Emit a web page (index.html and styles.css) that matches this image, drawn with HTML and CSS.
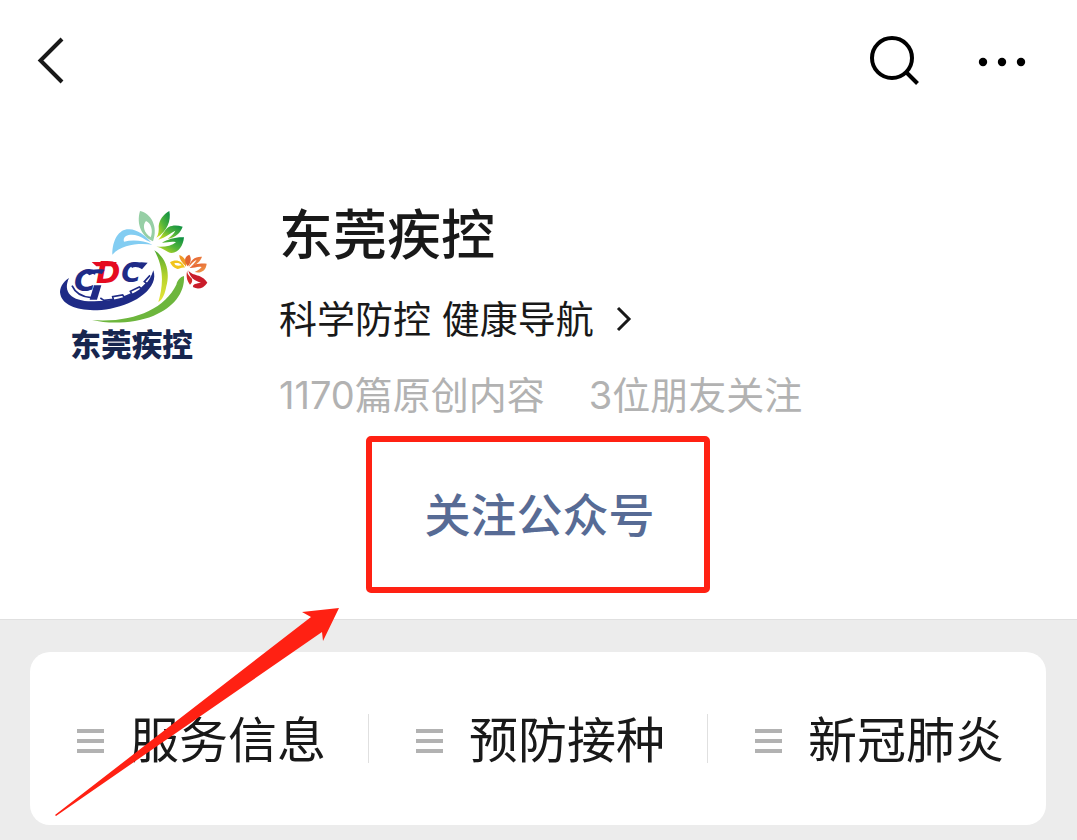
FILE: index.html
```html
<!DOCTYPE html>
<html lang="zh-CN">
<head>
  <meta charset="UTF-8" />
  <meta name="viewport" content="width=device-width, initial-scale=1.0"/>
  <title>东莞疾控</title>
  <link rel="stylesheet" href="styles.css">
</head>
<body>
  <header class="topbar">
    <button class="icon-btn" type="button" aria-label="返回">
      <svg width="30" height="50" viewBox="0 0 30 50" fill="none" stroke="#191919" stroke-width="4"><path d="M27 4L5.500 25.500L27 47"/></svg>
    </button>
    <div class="topbar-actions">
      <button class="icon-btn" type="button" aria-label="搜索">
        <svg width="52" height="52" viewBox="0 0 52 52" fill="none" stroke="#000" stroke-width="4"><circle cx="24" cy="24" r="20"/><path d="M38 38L49.500 49.500"/></svg>
      </button>
      <button class="icon-btn" type="button" aria-label="更多">
        <svg width="48" height="52" viewBox="0 0 48 52"><circle cx="5" cy="28" r="4.200"/><circle cx="24" cy="28" r="4.200"/><circle cx="43" cy="28" r="4.200"/></svg>
      </button>
    </div>
  </header>

  <main>
    <section class="profile">
      <div class="profile-main">
        <svg class="avatar" viewBox="0 0 510 510" role="img" aria-label="东莞疾控">
          <defs>
            <linearGradient id="leaf" x1="0" y1="1" x2="1" y2="0">
              <stop offset="0" stop-color="#e3e51c"/><stop offset=".5" stop-color="#55b53a"/><stop offset="1" stop-color="#078c43"/>
            </linearGradient>
            <linearGradient id="stem" x1="0" y1="0" x2="0" y2="1">
              <stop offset="0" stop-color="#4ca832"/><stop offset=".5" stop-color="#b5d22c"/><stop offset="1" stop-color="#e8e63a"/>
            </linearGradient>
            <linearGradient id="petal" x1="0" y1="0" x2="1" y2="1">
              <stop offset="0" stop-color="#e3502c"/><stop offset="1" stop-color="#f0a24c"/>
            </linearGradient>
          </defs>
          <!-- large flower -->
          <path fill="#83cdf2" d="M187 164C187 118 208 86 238 88C262 89 286 106 303 127L289 121C264 103 242 101 228 108C221 113 220 120 222 125C248 119 281 121 307 134C269 129 216 132 187 164Z"/>
          <path fill="#96cfa5" fill-rule="evenodd" d="M309 124C276 110 258 74 270 33C302 39 326 79 309 124ZM302 112C311 91 302 68 288 63C276 76 282 99 302 112Z"/>
          <path fill="url(#leaf)" d="M319 113C326 104 327 91 326 78C328 59 341 43 358 33C364 61 352 95 319 113Z"/>
          <path fill="url(#leaf)" d="M325 119C337 107 342 91 356 81C368 75 382 75 398 80C391 99 378 111 353 117C366 106 373 99 376 92C362 98 347 113 325 119Z"/>
          <path fill="url(#leaf)" d="M336 128C353 119 374 111 402 112C400 136 386 159 365 159C350 157 339 143 319 140C342 142 364 139 378 127C363 123 349 129 336 128Z"/>
          <!-- stems -->
          <path fill="url(#stem)" d="M313 151C348 173 361 214 349 259C345 281 338 300 325 306C337 263 346 211 313 151Z"/>
          <path fill="#6db63d" d="M126 360C248 369 343 328 379 254C382 240 391 231 402 228C405 279 370 323 311 347C253 370 181 373 126 360Z"/>
          <!-- small flower -->
          <path fill="#f2c51d" fill-rule="evenodd" d="M405 203C394 201 387 208 382 207C370 203 364 196 360 187C375 177 397 180 405 203ZM395 196C389 188 380 188 373 190C376 199 385 198 395 196Z"/>
          <path fill="#ef9b27" d="M408 200C397 187 388 179 388 165C402 170 412 184 408 200Z"/>
          <path fill="#e2642f" d="M413 199C400 182 404 169 418 164C426 177 422 190 413 199Z"/>
          <path fill="url(#petal)" d="M416 201C422 181 433 169 456 170C452 183 441 194 424 198C432 191 437 185 440 179C429 184 423 193 416 201Z"/>
          <path fill="url(#petal)" d="M419 204C431 191 450 190 470 191C468 213 451 221 434 216C445 211 451 206 455 201C442 198 432 205 419 204Z"/>
          <path fill="#c91c2a" d="M415 211C428 231 455 220 472 248C461 266 443 269 430 262C424 252 441 250 453 248C435 244 419 233 415 211Z"/>
          <path fill="#d52a28" d="M412 211C410 224 421 230 426 237C428 244 425 250 420 254C409 240 408 224 412 211Z"/>
          <!-- rail ring -->
          <path fill="#1f2b86" d="M57 234C37 276 64 306 133 304C214 303 291 278 310 211C328 262 260 312 181 326C105 339 40 324 31 283C27 264 39 246 57 234Z"/>
          <path fill="none" stroke="#1f2b86" stroke-width="5" d="M66 257C77 282 97 291 124 293M151 294L162 301L190 298L188 290L218 285L222 291L245 281L241 274L268 261L274 266L290 250L283 245L300 226"/>
          <g font-family="DejaVu Sans" font-style="italic" font-weight="700">
            <text x="72" y="273" font-size="90" fill="#1f2b86">C</text>
            <text x="214" y="246" font-size="80" fill="#1f2b86">C</text>
            <text x="138" y="250" font-size="88" fill="#e50b20">D</text>
          </g>
          <path fill="#1f2b86" d="M106 216C122 208 142 206 164 209L156 222C140 218 130 220 118 226Z"/>
          <path fill="#1f2b86" d="M240 194C256 186 274 185 293 188L276 208C264 199 252 200 246 204Z"/>
          <path fill="#e50b20" d="M125 186H200L193 199H139Z"/>
          <path fill="#1f2b86" d="M132 256H154L141 299H119Z"/>
          <text class="avatar-name" x="61" y="467">东莞疾控</text>
        </svg>
        <div class="info">
          <h1>东莞疾控</h1>
          <a class="intro" href="#">科学防控 健康导航
            <svg width="16" height="26" viewBox="0 0 16 26" fill="none" stroke="#191919" stroke-width="3"><path d="M2 2L13 13L2 24"/></svg>
          </a>
          <p class="stats"><span>1170篇原创内容</span><span>3位朋友关注</span></p>
        </div>
      </div>
      <button class="follow" type="button">关注公众号</button>
    </section>

    <nav class="menu">
      <button class="menu-item" type="button"><span class="bars"></span>服务信息</button>
      <button class="menu-item" type="button"><span class="bars"></span>预防接种</button>
      <button class="menu-item" type="button"><span class="bars"></span>新冠肺炎</button>
    </nav>
  </main>

  <svg class="arrow" width="284" height="208" viewBox="0 0 284 208"><path fill="#ff2113" d="M284 0L247 4L256 9L0 207L1 208L267 24L268 33Z"/></svg>
</body>
</html>
```
FILE: styles.css
```css
* {
  box-sizing: border-box;
}

body {
  position: relative;
  margin: 0;
  min-height: 100vh;
  background: #ececec;
  color: #191919;
  font-family: Inter, "Noto Sans CJK SC", sans-serif;
}

button {
  padding: 0;
  border: none;
  background: none;
  color: inherit;
  font-family: inherit;
  cursor: pointer;
}

svg {
  display: block;
}

.topbar {
  display: flex;
  justify-content: space-between;
  align-items: center;
  height: 120px;
  padding: 0 51px 0 35px;
  background: #fff;
}

.topbar-actions {
  display: flex;
  gap: 58px;
}

.profile {
  padding: 78px 52px 26px 50px;
  border-bottom: 1px solid #e0e0e0;
  background: #fff;
}

.profile-main {
  display: flex;
  gap: 59px;
}

.avatar {
  flex: none;
  width: 170px;
  height: 170px;
  margin-top: 2px;
}

.avatar-name {
  font-family: "Noto Sans CJK SC", sans-serif;
  font-size: 92px;
  font-weight: 900;
  fill: #17264f;
}

h1 {
  margin: 0 0 18px;
  font-size: 54px;
  font-weight: 500;
  line-height: 76px;
}

.intro {
  display: flex;
  align-items: center;
  gap: 22px;
  color: inherit;
  font-size: 38px;
  line-height: 54px;
  text-decoration: none;
}

.stats {
  display: flex;
  gap: 44px;
  margin: 22px 0 14px;
  color: #b2b2b2;
  font-size: 38px;
  line-height: 54px;
}

.follow {
  display: block;
  width: 344px;
  height: 157px;
  margin: 0 auto;
  padding: 0 0 6px 4px;
  border: 6px solid #ff2113;
  border-radius: 5px;
  color: #576b95;
  font-size: 46px;
  font-weight: 500;
}

.menu {
  display: flex;
  margin: 32px 31px 15px 30px;
  padding: 62px 0;
  border-radius: 20px;
  background: #fff;
}

.menu-item {
  display: flex;
  flex: 1;
  align-items: center;
  gap: 26px;
  height: 49px;
  padding: 4px 0 0 47px;
  font-size: 49px;
  line-height: 49px;
}

.menu-item + .menu-item {
  border-left: 1px solid #e0e0e0;
}

.bars {
  width: 27px;
  height: 24px;
  border-top: 4px solid #b2b2b2;
  border-bottom: 4px solid #b2b2b2;
  background: linear-gradient(#b2b2b2, #b2b2b2) center / 100% 4px no-repeat;
}

/* pointer towards the follow button */
.arrow {
  position: absolute;
  top: 608px;
  left: 55px;
  pointer-events: none;
}
```
